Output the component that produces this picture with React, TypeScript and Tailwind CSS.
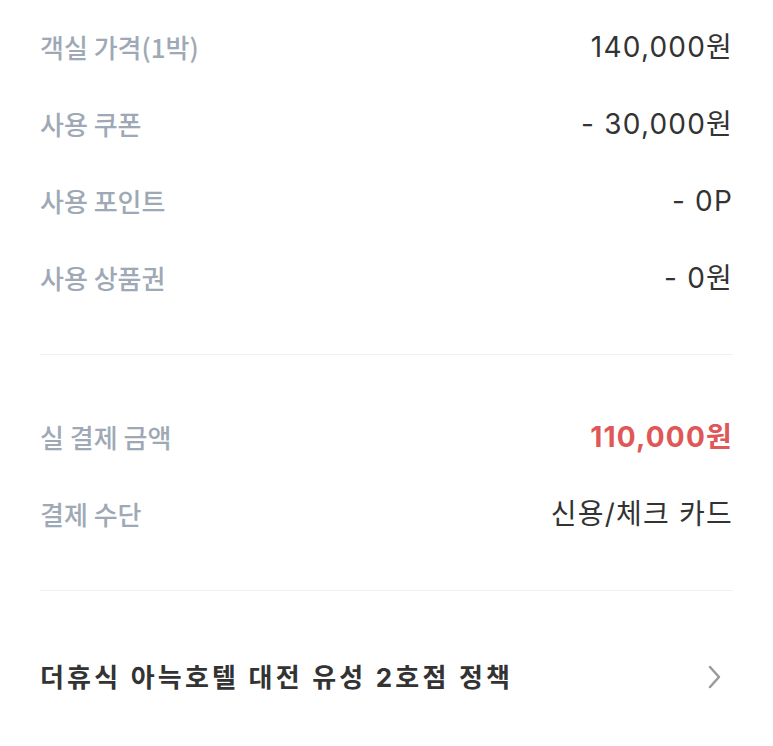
import React from "react";

const font = { fontFamily: '"Noto Sans CJK KR", "Noto Sans", sans-serif' };
const valFont = { fontFamily: 'Inter, "Noto Sans CJK KR", sans-serif' };

function Row({ label, value, valueClass = "text-[#333333]" }: { label: string; value: string; valueClass?: string }) {
  return (
    <div className="flex h-[77px] items-center justify-between">
      <span className="text-[26px] font-medium text-[#9ea9b5]">{label}</span>
      <span className={`text-[28px] tracking-[1.2px] ${valueClass}`} style={valFont}>
        {value}
      </span>
    </div>
  );
}

export default function App() {
  return (
    <div className="w-[773px] h-[746px] bg-white px-10 pt-2" style={font}>
      <Row label="객실 가격(1박)" value="140,000원" />
      <Row label="사용 쿠폰" value="- 30,000원" />
      <Row label="사용 포인트" value="- 0P" />
      <Row label="사용 상품권" value="- 0원" />
      <div className="mt-[38px] h-px bg-[#f0f0f0]" />
      <div className="mt-[43px]">
        <Row label="실 결제 금액" value="110,000원" valueClass="font-bold text-[#e05757]" />
        <Row label="결제 수단" value="신용/체크 카드" />
      </div>
      <div className="mt-[38px] h-px bg-[#f0f0f0]" />
      <div className="flex h-[180px] items-center justify-between pb-[8px]">
        <span className="text-[26px] font-bold text-[#333333] tracking-[3.2px]" style={valFont}>
          더휴식 아늑호텔 대전 유성 2호점 정책
        </span>
        <svg width="16" height="26" viewBox="0 0 16 26" className="mr-[10px]" fill="none">
          <path d="M3 3 L12 13 L3 23" stroke="#9a9a9a" strokeWidth="2.5" strokeLinecap="round" strokeLinejoin="round" />
        </svg>
      </div>
    </div>
  );
}
